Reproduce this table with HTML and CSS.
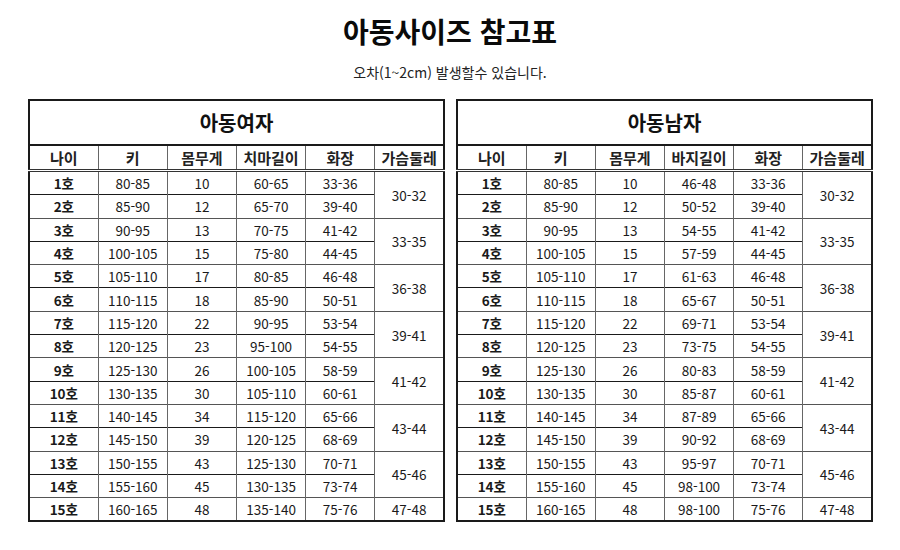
FILE: index.html
```html
<!DOCTYPE html>
<html lang="ko">
<head>
<meta charset="utf-8">
<title>아동사이즈 참고표</title>
<link rel="stylesheet" href="styles.css">
</head>
<body>
<div class="page">
  <h1 class="title">아동사이즈 참고표</h1>
  <p class="sub">오차(1~2cm) 발생할수 있습니다.</p>
  <div class="tables">
    <table class="size">
      <colgroup><col><col><col><col><col><col></colgroup>
      <tr class="cap"><td colspan="6">아동여자</td></tr>
      <tr class="head"><th>나이</th><th>키</th><th>몸무게</th><th>치마길이</th><th>화장</th><th>가슴둘레</th></tr>
      <tr class="odd"><td class="age">1호</td><td>80-85</td><td>10</td><td>60-65</td><td>33-36</td><td rowspan="2" class="chest">30-32</td></tr>
      <tr class="even"><td class="age">2호</td><td>85-90</td><td>12</td><td>65-70</td><td>39-40</td></tr>
      <tr class="odd"><td class="age">3호</td><td>90-95</td><td>13</td><td>70-75</td><td>41-42</td><td rowspan="2" class="chest">33-35</td></tr>
      <tr class="even"><td class="age">4호</td><td>100-105</td><td>15</td><td>75-80</td><td>44-45</td></tr>
      <tr class="odd"><td class="age">5호</td><td>105-110</td><td>17</td><td>80-85</td><td>46-48</td><td rowspan="2" class="chest">36-38</td></tr>
      <tr class="even"><td class="age">6호</td><td>110-115</td><td>18</td><td>85-90</td><td>50-51</td></tr>
      <tr class="odd"><td class="age">7호</td><td>115-120</td><td>22</td><td>90-95</td><td>53-54</td><td rowspan="2" class="chest">39-41</td></tr>
      <tr class="even"><td class="age">8호</td><td>120-125</td><td>23</td><td>95-100</td><td>54-55</td></tr>
      <tr class="odd"><td class="age">9호</td><td>125-130</td><td>26</td><td>100-105</td><td>58-59</td><td rowspan="2" class="chest">41-42</td></tr>
      <tr class="even"><td class="age">10호</td><td>130-135</td><td>30</td><td>105-110</td><td>60-61</td></tr>
      <tr class="odd"><td class="age">11호</td><td>140-145</td><td>34</td><td>115-120</td><td>65-66</td><td rowspan="2" class="chest">43-44</td></tr>
      <tr class="even"><td class="age">12호</td><td>145-150</td><td>39</td><td>120-125</td><td>68-69</td></tr>
      <tr class="odd"><td class="age">13호</td><td>150-155</td><td>43</td><td>125-130</td><td>70-71</td><td rowspan="2" class="chest">45-46</td></tr>
      <tr class="even"><td class="age">14호</td><td>155-160</td><td>45</td><td>130-135</td><td>73-74</td></tr>
      <tr class="odd"><td class="age">15호</td><td>160-165</td><td>48</td><td>135-140</td><td>75-76</td><td class="chest">47-48</td></tr>
    </table>
    <table class="size">
      <colgroup><col><col><col><col><col><col></colgroup>
      <tr class="cap"><td colspan="6">아동남자</td></tr>
      <tr class="head"><th>나이</th><th>키</th><th>몸무게</th><th>바지길이</th><th>화장</th><th>가슴둘레</th></tr>
      <tr class="odd"><td class="age">1호</td><td>80-85</td><td>10</td><td>46-48</td><td>33-36</td><td rowspan="2" class="chest">30-32</td></tr>
      <tr class="even"><td class="age">2호</td><td>85-90</td><td>12</td><td>50-52</td><td>39-40</td></tr>
      <tr class="odd"><td class="age">3호</td><td>90-95</td><td>13</td><td>54-55</td><td>41-42</td><td rowspan="2" class="chest">33-35</td></tr>
      <tr class="even"><td class="age">4호</td><td>100-105</td><td>15</td><td>57-59</td><td>44-45</td></tr>
      <tr class="odd"><td class="age">5호</td><td>105-110</td><td>17</td><td>61-63</td><td>46-48</td><td rowspan="2" class="chest">36-38</td></tr>
      <tr class="even"><td class="age">6호</td><td>110-115</td><td>18</td><td>65-67</td><td>50-51</td></tr>
      <tr class="odd"><td class="age">7호</td><td>115-120</td><td>22</td><td>69-71</td><td>53-54</td><td rowspan="2" class="chest">39-41</td></tr>
      <tr class="even"><td class="age">8호</td><td>120-125</td><td>23</td><td>73-75</td><td>54-55</td></tr>
      <tr class="odd"><td class="age">9호</td><td>125-130</td><td>26</td><td>80-83</td><td>58-59</td><td rowspan="2" class="chest">41-42</td></tr>
      <tr class="even"><td class="age">10호</td><td>130-135</td><td>30</td><td>85-87</td><td>60-61</td></tr>
      <tr class="odd"><td class="age">11호</td><td>140-145</td><td>34</td><td>87-89</td><td>65-66</td><td rowspan="2" class="chest">43-44</td></tr>
      <tr class="even"><td class="age">12호</td><td>145-150</td><td>39</td><td>90-92</td><td>68-69</td></tr>
      <tr class="odd"><td class="age">13호</td><td>150-155</td><td>43</td><td>95-97</td><td>70-71</td><td rowspan="2" class="chest">45-46</td></tr>
      <tr class="even"><td class="age">14호</td><td>155-160</td><td>45</td><td>98-100</td><td>73-74</td></tr>
      <tr class="odd"><td class="age">15호</td><td>160-165</td><td>48</td><td>98-100</td><td>75-76</td><td class="chest">47-48</td></tr>
    </table>
  </div>
</div>
</body>
</html>
```
FILE: styles.css
```css
html, body {
  margin: 0;
  padding: 0;
  background: #ffffff;
}
body {
  font-family: "Noto Sans CJK KR", "Noto Sans", sans-serif;
  color: #111111;
}
.page {
  width: 900px;
  padding-top: 12px;
}
.title {
  margin: 0;
  text-align: center;
  font-size: 28px;
  font-weight: 700;
  line-height: 38px;
  color: #0a0a0a;
}
.sub {
  margin: 12px 0 0 0;
  text-align: center;
  font-size: 14px;
  line-height: 20px;
  color: #222222;
}
.tables {
  display: flex;
  gap: 11px;
  padding-left: 28px;
  margin-top: 17px;
}
.size {
  width: 417px;
  table-layout: fixed;
  border-collapse: collapse;
  border: 2px solid #1a1a1a;
}
.size td, .size th {
  padding: 0;
  text-align: center;
  vertical-align: middle;
  border-top: 1px solid #2a2a2a;
  border-left: 1px solid #666666;
  font-size: 13.5px;
  font-weight: 400;
  line-height: 16px;
  color: #1a1a1a;
}
.size .cap td {
  height: 43px;
  font-size: 20px;
  font-weight: 700;
  color: #111111;
}
.size .head th {
  height: 23px;
  font-size: 15px;
  font-weight: 700;
  border-top: 2px solid #1a1a1a;
  border-bottom: 3px double #333333;
  color: #222222;
}
.size .odd td, .size .even td {
  height: 22.3px;
}
.size .odd td {
  border-top: 1px solid #555555;
}
.size .even td {
  border-top: 1px solid #1a1a1a;
}
.size td.age {
  font-weight: 700;
}
```
